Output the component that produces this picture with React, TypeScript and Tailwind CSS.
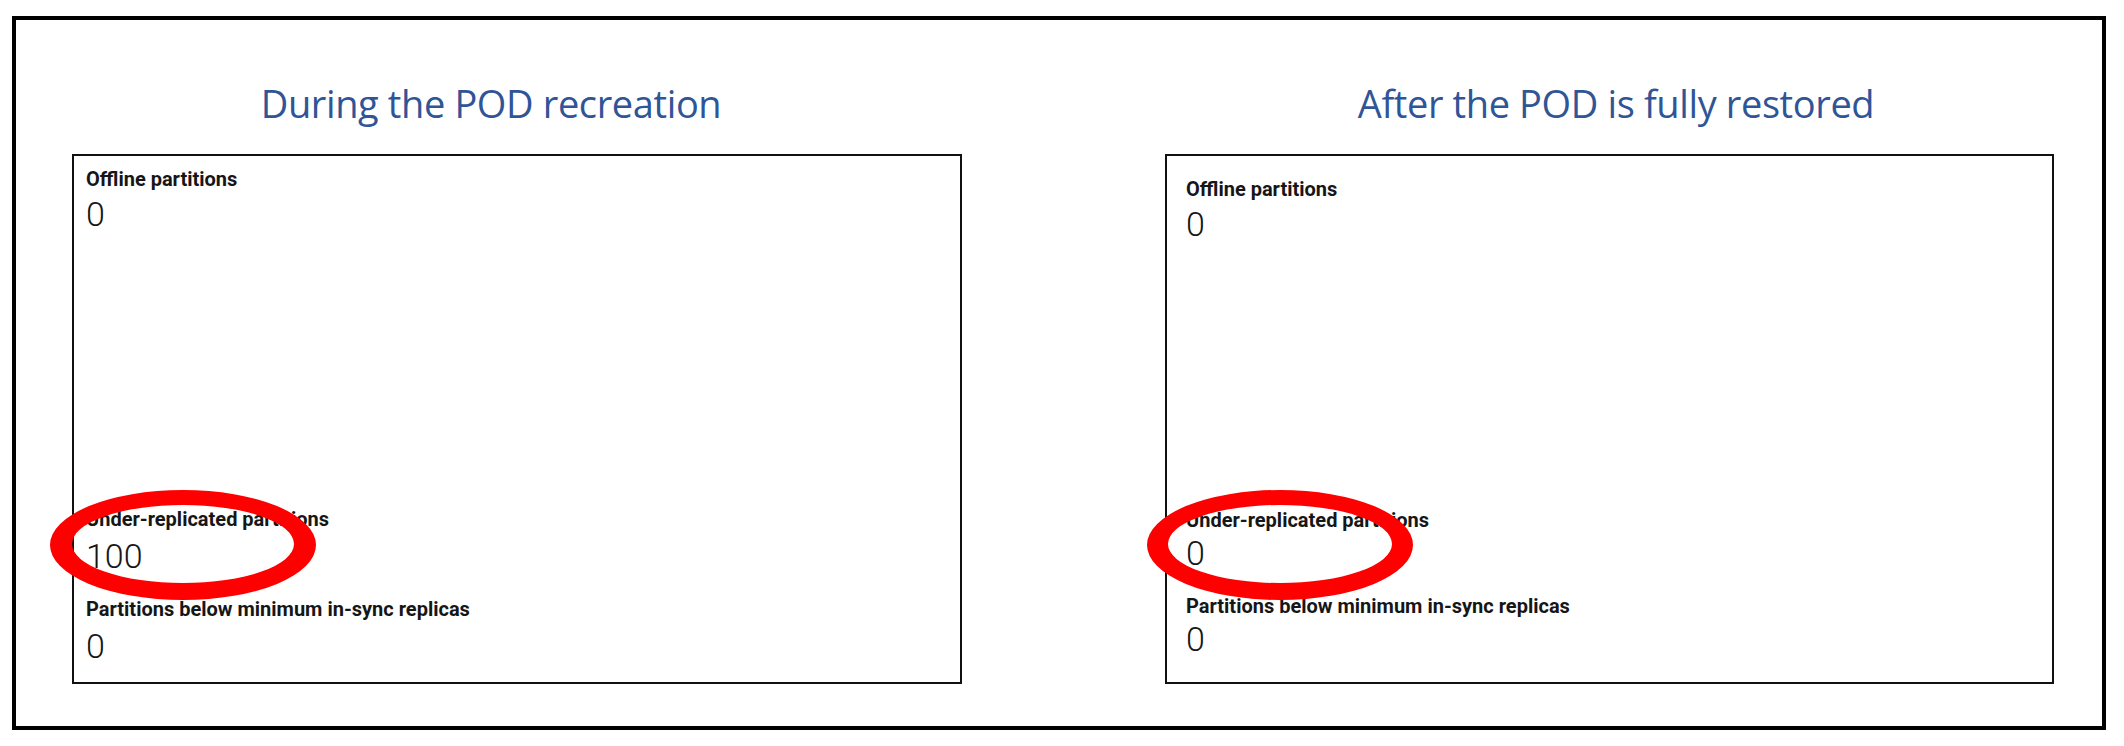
const labelCls =
  "font-['Roboto',sans-serif] font-bold text-[20px] leading-[24px] text-[#161616]";
const valueCls =
  "font-['Roboto',sans-serif] font-light text-[34px] leading-[38px] text-[#161616]";

type Metric = { label: string; value: string };

const MetricBlock = ({ m, gap }: { m: Metric; gap: string }) => (
  <div className="flex flex-col">
    <div className={labelCls}>{m.label}</div>
    <div className={`${valueCls} ${gap}`}>{m.value}</div>
  </div>
);

const Card = ({
  pad,
  gapTop,
  gapBottom,
  under,
}: {
  pad: string;
  gapTop: string;
  gapBottom: string;
  under: string;
}) => (
  <div
    className={`flex h-[530px] flex-col justify-between border-2 border-[#111] bg-white ${pad}`}
  >
    <MetricBlock m={{ label: "Offline partitions", value: "0" }} gap={gapTop} />
    <div className="flex flex-col gap-[22px]">
      <MetricBlock
        m={{ label: "Under-replicated partitions", value: under }}
        gap={gapBottom}
      />
      <MetricBlock
        m={{ label: "Partitions below minimum in-sync replicas", value: "0" }}
        gap={gapBottom}
      />
    </div>
  </div>
);

const titleCls =
  "mt-[61px] mb-[29px] text-center font-['Open_Sans',sans-serif] text-[38px] leading-[44px] tracking-[-0.01em] text-[#2f5597]";

export default function App() {
  return (
    <div className="relative h-[746px] w-[2124px] bg-white pt-[16px] pl-[12px]">
      <div className="flex h-[714px] w-[2094px] border-4 border-black">
        <div className="ml-[56px] flex w-[890px] flex-col">
          <div className={`${titleCls} pr-[52px]`}>During the POD recreation</div>
          <Card
            pad="pt-[11px] pb-[17px] pl-[12px]"
            gapTop="mt-[4px]"
            gapBottom="mt-[6px]"
            under="100"
          />
        </div>
        <div className="ml-[203px] flex w-[889px] flex-col">
          <div className={`${titleCls} pl-[13px]`}>
            After the POD is fully restored
          </div>
          <Card
            pad="pt-[21px] pb-[24px] pl-[19px]"
            gapTop="mt-[4px]"
            gapBottom="mt-[2px]"
            under="0"
          />
        </div>
      </div>

      {/* red highlight rings */}
      <svg
        className="pointer-events-none absolute inset-0"
        width="2124"
        height="746"
        viewBox="0 0 2124 746"
      >
        <path
          fill="#ff0000"
          fillRule="evenodd"
          d="M50 545a133 55 0 1 0 266 0a133 55 0 1 0 -266 0Z M72 544a111 39 0 1 0 222 0a111 39 0 1 0 -222 0Z"
        />
        <path
          fill="#ff0000"
          fillRule="evenodd"
          d="M1147 545a133 55 0 1 0 266 0a133 55 0 1 0 -266 0Z M1168 544a112 39 0 1 0 224 0a112 39 0 1 0 -224 0Z"
        />
      </svg>
    </div>
  );
}
